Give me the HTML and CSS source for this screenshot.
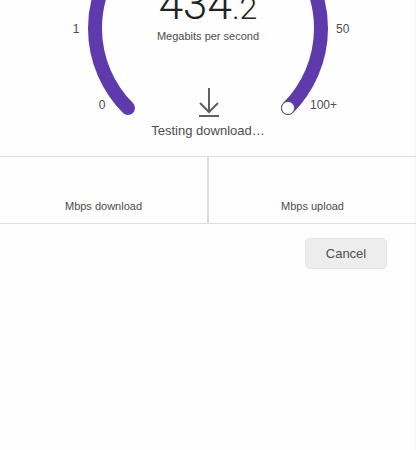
FILE: index.html
```
<!DOCTYPE html>
<html lang="en">
<head>
  <meta charset="UTF-8" />
  <meta name="viewport" content="width=device-width, initial-scale=1.0"/>
  <title>Internet speed test</title>
  <link rel="stylesheet" href="styles.css">
</head>
<body>
  <main class="speed-test">
    <section class="gauge">
      <svg class="dial" viewBox="0 0 300 156" width="300" height="156" aria-hidden="true">
        <path class="track" d="M70 108 A113 113 0 1 1 230 108"/>
        <circle class="knob" cx="230" cy="108" r="6.5"/>
        <text x="18" y="33" text-anchor="middle">1</text>
        <text x="44" y="109" text-anchor="middle">0</text>
        <text x="278" y="33">50</text>
        <text x="252" y="109">100+</text>
      </svg>
      <div class="reading">
        <p class="speed">434<span class="decimal">.2</span></p>
        <p class="unit">Megabits per second</p>
        <svg class="arrow" viewBox="0 0 22 30" width="22" height="30" aria-hidden="true">
          <path d="M12 0 V23 M3 15 L12 24 L21 15"/>
          <path d="M2 28 H22"/>
        </svg>
        <p class="status">Testing download…</p>
      </div>
    </section>

    <section class="results">
      <div class="result">Mbps download</div>
      <div class="result">Mbps upload</div>
    </section>

    <div class="actions">
      <button type="button" class="cancel">Cancel</button>
    </div>
  </main>
</body>
</html>
```
FILE: styles.css
```
:root {
  --accent: #5f3aad;
  --text: #4d4d4d;
  --line: #dedede;
}
* { box-sizing: border-box; margin: 0; padding: 0; }
body {
  font-family: "Liberation Sans", Arial, sans-serif;
  background: #fefefe;
  color: var(--text);
  box-shadow: inset -2px 0 #f8f8f8;
  min-height: 100vh;
}
.gauge {
  display: grid;
  justify-items: center;
  overflow: hidden;
}
.dial, .reading { grid-area: 1 / 1; }
.dial text {
  font-size: 12px;
  fill: var(--text);
}
.track {
  fill: none;
  stroke: var(--accent);
  stroke-width: 14;
  stroke-linecap: round;
}
.knob {
  fill: #fff;
  stroke: #55506a;
  stroke-width: 1;
}
.reading {
  display: flex;
  flex-direction: column;
  align-items: center;
  justify-content: flex-end;
  height: 156px;
  padding-bottom: 16px;
}
.reading > * { flex-shrink: 0; }
.speed {
  font-family: Roboto, "Liberation Sans", sans-serif;
  font-size: 44px;
  font-weight: 300;
  line-height: 40px;
  color: #222;
}
.decimal { font-size: 32px; }
.unit {
  font-size: 11px;
  line-height: 16px;
}
.arrow {
  margin: 44px 0 4px;
  fill: none;
  stroke: #606060;
  stroke-width: 2;
}
.status {
  font-size: 13px;
  line-height: 18px;
}
.results {
  display: grid;
  grid-template-columns: 1fr 1fr;
  border-top: 1px solid var(--line);
  border-bottom: 1px solid var(--line);
}
.result {
  padding: 42px 0 10px;
  font-size: 11px;
  line-height: 14px;
  text-align: center;
}
.result:first-child { border-right: 1px solid var(--line); }
.result:last-child { border-left: 1px solid var(--line); }
.actions {
  display: flex;
  justify-content: flex-end;
  padding: 14px 29px;
}
.cancel {
  width: 82px;
  height: 31px;
  border: 1px solid #e6e6e6;
  border-radius: 5px;
  background: #ededed;
  color: var(--text);
  font: inherit;
  font-size: 13px;
  cursor: pointer;
}
```
